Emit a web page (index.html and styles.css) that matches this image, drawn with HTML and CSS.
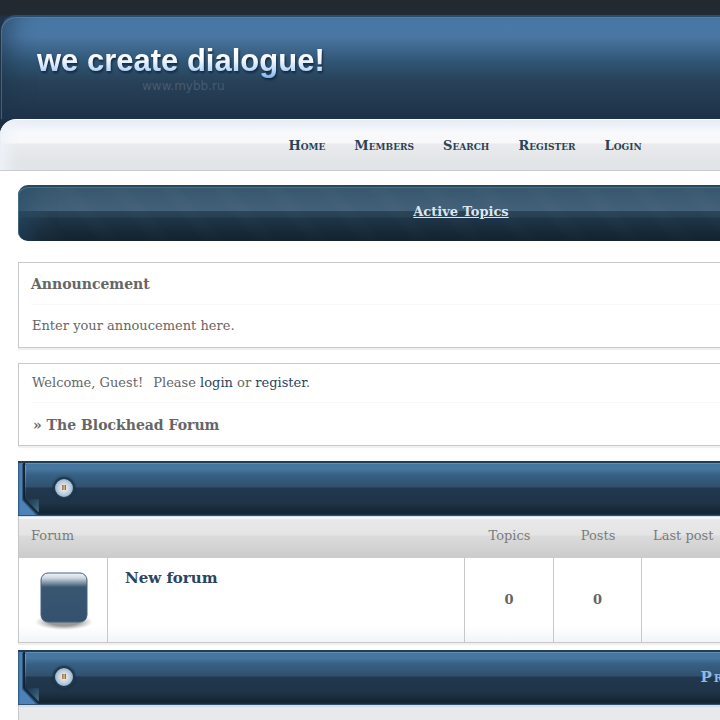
FILE: index.html
```html
<!DOCTYPE html>
<html lang="en">
<head>
<meta charset="utf-8">
<title>The Blockhead Forum</title>
<link rel="stylesheet" href="styles.css">
</head>
<body>
<svg class="defs" aria-hidden="true">
  <defs>
    <linearGradient id="fold" x1="0" y1="0" x2="1" y2="1">
      <stop offset="0" stop-color="#16314a"/>
      <stop offset="0.5" stop-color="#2d4f69"/>
      <stop offset="1" stop-color="#547890"/>
    </linearGradient>
    <linearGradient id="edge" x1="0" y1="0" x2="0" y2="1">
      <stop offset="0" stop-color="#4f7ead"/>
      <stop offset="1" stop-color="#4e82b8"/>
    </linearGradient>
    <linearGradient id="lip" x1="0" y1="0" x2="0" y2="1">
      <stop offset="0" stop-color="#6ba5bf"/>
      <stop offset="1" stop-color="#6ba5bf" stop-opacity="0"/>
    </linearGradient>
    <symbol id="ribbon" viewBox="0 0 24 54">
      <path d="M0 0H6V38L21 53H0Z" fill="url(#edge)"/>
      <path d="M0 0H1V53H0Z" fill="#2c5b88"/>
      <path d="M4 1V38L18 53H24L6 37V1Z" fill="#122b42" opacity=".55"/>
      <path d="M6 0V37" stroke="#0e2338" stroke-width="2"/>
      <path d="M7 2H8V36H7Z" fill="url(#lip)"/>
      <path d="M6 37H21V52Z" fill="url(#fold)"/>
      <path d="M6 37L21 52" stroke="#142a3c" stroke-width="2"/>
    </symbol>
  </defs>
</svg>
<div class="page">
  <header class="header">
    <div class="brand">
      <svg class="logo" width="300" height="36">
        <defs>
          <linearGradient id="ink" gradientUnits="userSpaceOnUse" x1="0" y1="2" x2="0" y2="33">
            <stop offset="0.1" stop-color="#fff"/>
            <stop offset="0.4" stop-color="#f0f7ff"/>
            <stop offset="0.75" stop-color="#b4d4f8"/>
            <stop offset="1" stop-color="#74aeef"/>
          </linearGradient>
        </defs>
        <text x="0" y="25">we create dialogue!</text>
      </svg>
      <div class="site">www.mybb.ru</div>
    </div>
    <nav class="nav">
      <a href="#">Home</a>
      <a href="#">Members</a>
      <a href="#">Search</a>
      <a href="#">Register</a>
      <a href="#">Login</a>
    </nav>
  </header>
  <main class="content">
    <div class="topics"><a href="#">Active Topics</a></div>
    <section class="box announcement">
      <h2>Announcement</h2>
      <p>Enter your annoucement here.</p>
    </section>
    <section class="box welcome">
      <p><span class="greeting">Welcome, Guest!</span> Please <a href="#">login</a> or <a href="#">register</a>.</p>
      <h1>» The Blockhead Forum</h1>
    </section>
    <section class="category">
      <div class="bar">
        <svg class="ribbon" aria-hidden="true"><use href="#ribbon"/></svg>
        <button class="toggle" type="button">II</button>
      </div>
      <table class="forums">
        <colgroup><col class="c-icon"><col class="c-name"><col class="c-topics"><col class="c-posts"><col></colgroup>
        <thead>
          <tr><th colspan="2">Forum</th><th class="num">Topics</th><th class="num">Posts</th><th>Last post</th></tr>
        </thead>
        <tbody>
          <tr>
            <td class="icon">
              <svg viewBox="0 0 60 62" width="60" height="62" aria-hidden="true">
                <defs>
                  <linearGradient id="gloss" x1="0" y1="0" x2="0" y2="1">
                    <stop offset="0" stop-color="#f0f4f8"/>
                    <stop offset="0.1" stop-color="#cfd8e2"/>
                    <stop offset="0.29" stop-color="#38566f"/>
                    <stop offset="1" stop-color="#345270"/>
                  </linearGradient>
                  <radialGradient id="shade">
                    <stop offset="0.5" stop-color="#777" stop-opacity=".75"/>
                    <stop offset="1" stop-color="#999" stop-opacity="0"/>
                  </radialGradient>
                </defs>
                <ellipse cx="31" cy="53" rx="29" ry="8" fill="url(#shade)"/>
                <rect x="8" y="4" width="46" height="49" rx="7" fill="url(#gloss)" stroke="#46617e"/>
              </svg>
            </td>
            <td class="name"><a href="#">New forum</a></td>
            <td class="num">0</td>
            <td class="num">0</td>
            <td></td>
          </tr>
        </tbody>
      </table>
    </section>
    <section class="category">
      <div class="bar">
        <svg class="ribbon" aria-hidden="true"><use href="#ribbon"/></svg>
        <button class="toggle" type="button">II</button>
        <h2>Pr</h2>
      </div>
      <div class="strip"></div>
    </section>
  </main>
</div>
</body>
</html>
```
FILE: styles.css
```css
* { box-sizing: border-box; }
html { overflow: hidden; }
body {
  margin: 0;
  background: #fff;
  color: #666;
  font: 13px/16px "DejaVu Serif", serif;
}
h1, h2, p { margin: 0; }
h1, h2 { font-size: 14px; line-height: 18px; }
a { color: #2b4560; text-decoration: none; }
.defs { position: absolute; width: 0; height: 0; }
.page { min-width: 922px; }

.header {
  padding-top: 15px;
  background: linear-gradient(#222a30 0 14px, #203448 18px, #1c2e40 132px, #fff 132px);
}
.brand {
  height: 104px;
  padding: 29px 0 0 36px;
  border-top: 2px solid #294e6d;
  border-left: 1px solid #203448;
  border-radius: 16px 0 0 0;
  background: linear-gradient(#4b7caa, #4a76a2 20px, #2f5472 46px, #284259 64px, #1f334a 100px);
  box-shadow: inset 1px 1px 0 #6289ad88, inset 20px 0 24px -12px #1b334b99;
}
.logo {
  display: block;
  overflow: visible;
  filter: drop-shadow(1px 2px 1px #13283d);
}
.logo text {
  font: bold 31px "Liberation Sans", sans-serif;
  fill: url(#ink);
}
.site {
  margin-top: -3px;
  padding-left: 105px;
  font: 12px/14px "DejaVu Sans", sans-serif;
  color: #465b71;
}
.nav {
  display: flex;
  justify-content: center;
  gap: 29px;
  height: 52px;
  padding: 18px 0 0 8px;
  border-top: 1px solid #fff;
  border-bottom: 1px solid #c8cbcf;
  border-radius: 16px 0 0 0;
  background: linear-gradient(#e3ebf4, #f8f9fb 12px, #f8f8fa 23px, #e9ebed 24px, #dfe2e4);
  box-shadow: inset 14px 0 14px -6px #eef3f9, inset 1px 0 0 #ccd6e3;
}
.nav a { font-weight: bold; font-variant: small-caps; color: #2b4257; }

.content { padding: 14px 18px 0; }
.topics {
  height: 56px;
  padding-top: 17px;
  text-align: center;
  border-top: 2px solid #24485d;
  border-radius: 10px 0 0 10px;
  background:
    repeating-linear-gradient(50deg, #ffffff00 0 20px, #ffffff03 26px 34px, #ffffff00 40px),
    linear-gradient(#38596f, #436079 24px, #2b4458 24px, #273f50 30px, #1e3549 31px, #13222d);
  box-shadow: inset 1px 1px 0 #53809899, inset 30px 0 20px -14px #274b6688;
}
.topics a { font-weight: bold; color: #dce6ee; text-decoration: underline; }

.box {
  padding: 0 12px;
  border: 1px solid #c6c8ca;
  box-shadow: 0 2px 1px #f0f0f0;
}
.announcement { height: 86px; margin-top: 21px; }
.announcement h2 { height: 42px; padding-top: 12px; border-bottom: 1px solid #f8f8f8; }
.announcement p { padding: 13px 1px; }
.welcome { height: 83px; margin: 15px 0; }
.welcome p { height: 39px; padding: 11px 1px 0; border-bottom: 1px solid #f8f8f8; }
.greeting { margin-right: 6px; }
.welcome h1 { padding: 13px 2px; }

.category { margin-bottom: 7px; }
.bar {
  display: flex;
  height: 55px;
  border-top: 2px solid #213d55;
  background: linear-gradient(#618eb9 1px, #4475a2 1px, #48779f 6px, #376084 12px, #30516e 24px, #21384e 25px, #203448 40px, #122431 50px, #16324b 52px, #4b708f);
}
.ribbon { width: 24px; height: 53px; flex: none; }
.toggle {
  width: 22px;
  height: 22px;
  margin: 14px 0 0 11px;
  padding: 0;
  border: 2px solid #1d3951;
  border-radius: 50%;
  background: radial-gradient(#f2f7fc, #bdcddd 50%, #6f8ba6);
  box-shadow: 0 0 2px #132638;
  color: #000;
  font: 8px/16px "Liberation Sans", sans-serif;
}
.bar h2 {
  margin-left: auto;
  padding: 16px 179px 0 0;
  color: #92b9df;
  font-size: 15px;
  font-variant: small-caps;
  letter-spacing: 2px;
}

.forums {
  width: 100%;
  table-layout: fixed;
  border-collapse: separate;
  border-spacing: 0;
  border-left: 1px solid #c6c8ca;
  box-shadow: 0 2px 1px #f0f0f0;
}
.c-icon { width: 89px; }
.c-name { width: 357px; }
.c-topics { width: 89px; }
.c-posts { width: 88px; }
th {
  height: 42px;
  padding: 0 11px 3px;
  font-weight: normal;
  text-align: left;
  color: #7b7b7b;
}
th:first-child { padding-left: 12px; }
thead { background: linear-gradient(#d5dfeb 1px, #f5f5f5 1px 3px, #e9e9e9 3px, #e4e4e4 19px, #dbdbdb 20px, #cbcbcb); }
td {
  height: 85px;
  padding: 0;
  border-bottom: 1px solid #c6c8ca;
  border-right: 1px solid #c6c8ca;
  background: linear-gradient(#fff 68px, #f1f5f8);
}
th.num, td.num { padding-left: 0; padding-right: 0; text-align: center; }
td.num { font-weight: bold; }
.icon svg { display: block; margin: 0 auto; }
.name { padding: 11px 17px; vertical-align: top; font-size: 15px; line-height: 18px; font-weight: bold; }
.strip {
  height: 42px;
  border-left: 1px solid #c6c8ca;
  background: linear-gradient(#d3dfea 2px, #f5eeee 3px, #e7e9eb 4px);
}
```
